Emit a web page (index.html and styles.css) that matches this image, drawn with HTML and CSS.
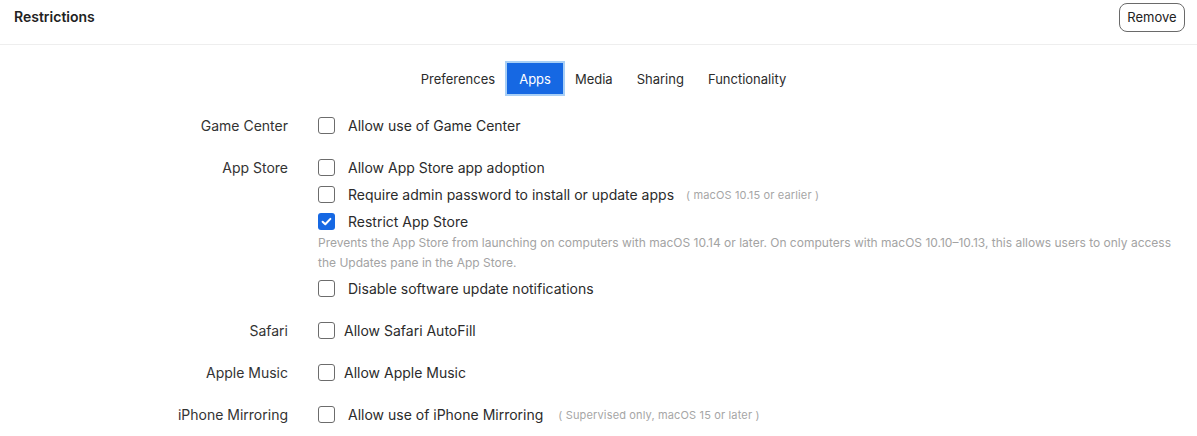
FILE: index.html
```html
<!DOCTYPE html>
<html lang="en">
<head>
<meta charset="utf-8">
<title>Restrictions</title>
<link rel="stylesheet" href="styles.css">
</head>
<body>
<header class="header">
  <h1 class="title">Restrictions</h1>
  <button class="remove-btn" type="button">Remove</button>
</header>

<nav class="tabs">
  <span class="tab">Preferences</span>
  <span class="tab tab-active">Apps</span>
  <span class="tab">Media</span>
  <span class="tab">Sharing</span>
  <span class="tab">Functionality</span>
</nav>

<main class="form">
  <section class="section">
    <div class="label">Game Center</div>
    <div class="items">
      <div class="item"><span class="box"></span><span class="text">Allow use of Game Center</span></div>
    </div>
  </section>

  <section class="section">
    <div class="label">App Store</div>
    <div class="items">
      <div class="item"><span class="box"></span><span class="text">Allow App Store app adoption</span></div>
      <div class="item"><span class="box"></span><span class="text">Require admin password to install or update apps</span><span class="note">( macOS 10.15 or earlier )</span></div>
      <div class="item"><span class="box box-checked"><svg viewBox="0 0 17 17" width="17" height="17"><path d="M4.6 8.8 L7.3 11.3 L12.4 5.9" fill="none" stroke="#fff" stroke-width="2" stroke-linecap="round" stroke-linejoin="round"/></svg></span><span class="text">Restrict App Store</span></div>
      <p class="desc">Prevents the App Store from launching on computers with macOS 10.14 or later. On computers with macOS 10.10–10.13, this allows users to only access the Updates pane in the App Store.</p>
      <div class="item"><span class="box"></span><span class="text">Disable software update notifications</span></div>
    </div>
  </section>

  <section class="section">
    <div class="label">Safari</div>
    <div class="items">
      <div class="item item-tight"><span class="box"></span><span class="text">Allow Safari AutoFill</span></div>
    </div>
  </section>

  <section class="section">
    <div class="label">Apple Music</div>
    <div class="items">
      <div class="item item-tight"><span class="box"></span><span class="text">Allow Apple Music</span></div>
    </div>
  </section>

  <section class="section">
    <div class="label">iPhone Mirroring</div>
    <div class="items">
      <div class="item"><span class="box"></span><span class="text">Allow use of iPhone Mirroring</span><span class="note note-wide">( Supervised only, macOS 15 or later )</span></div>
    </div>
  </section>
</main>
</body>
</html>
```

FILE: styles.css
```css
* {
  box-sizing: border-box;
}

html, body {
  margin: 0;
  padding: 0;
  background: #ffffff;
}

body {
  font-family: Inter, "Noto Sans", "Liberation Sans", sans-serif;
  color: #2b2b2b;
  font-size: 14px;
  overflow: hidden;
}

.header {
  display: flex;
  align-items: center;
  justify-content: space-between;
  height: 45px;
  padding: 0 12px 11px 14px;
  border-bottom: 1px solid #eeeeee;
}

.title {
  margin: 0;
  font-size: 14px;
  font-weight: 600;
  color: #222;
}

.remove-btn {
  font-family: inherit;
  font-size: 13px;
  color: #222;
  background: #fff;
  border: 1px solid #6a6a6a;
  border-radius: 8px;
  height: 29px;
  width: 66px;
  padding: 0;
  margin-top: 1px;
}

.tabs {
  display: flex;
  justify-content: center;
  padding-top: 18px;
  margin-bottom: 18px;
  padding-left: 10px;
}

.tab {
  display: flex;
  align-items: center;
  height: 31px;
  padding: 0 12px;
  font-size: 13px;
  color: #2b2b2b;
}

.tab-active {
  background: #1668e3;
  color: #fff;
  box-shadow: 0 0 0 2px #a8cff6;
}

.form {
  display: flex;
  flex-direction: column;
  gap: 15px;
}

.section {
  display: grid;
  grid-template-columns: 288px 1fr;
  column-gap: 30px;
  padding-right: 14px;
}

.label {
  text-align: right;
  line-height: 27px;
  height: 27px;
  color: #333;
}

.items {
  display: flex;
  flex-direction: column;
}

.item {
  display: flex;
  align-items: center;
  height: 27px;
  gap: 13px;
}

.item-tight {
  gap: 9px;
}

.box {
  width: 17px;
  height: 17px;
  flex: none;
  border: 1px solid #6c6c6c;
  border-radius: 3px;
  background: #fff;
}

.box-checked {
  border: none;
  background: #1668e3;
}

.box-checked svg {
  display: block;
}

.text {
  color: #2b2b2b;
  white-space: nowrap;
}

.note {
  margin-left: -1px;
  font-size: 11px;
  letter-spacing: 0.15px;
  color: #a6a6a6;
  white-space: nowrap;
}

.note-wide {
  margin-left: 2px;
}

.desc {
  margin: -2px 0 2px;
  font-size: 12px;
  line-height: 20px;
  color: #a3a3a3;
}
```
